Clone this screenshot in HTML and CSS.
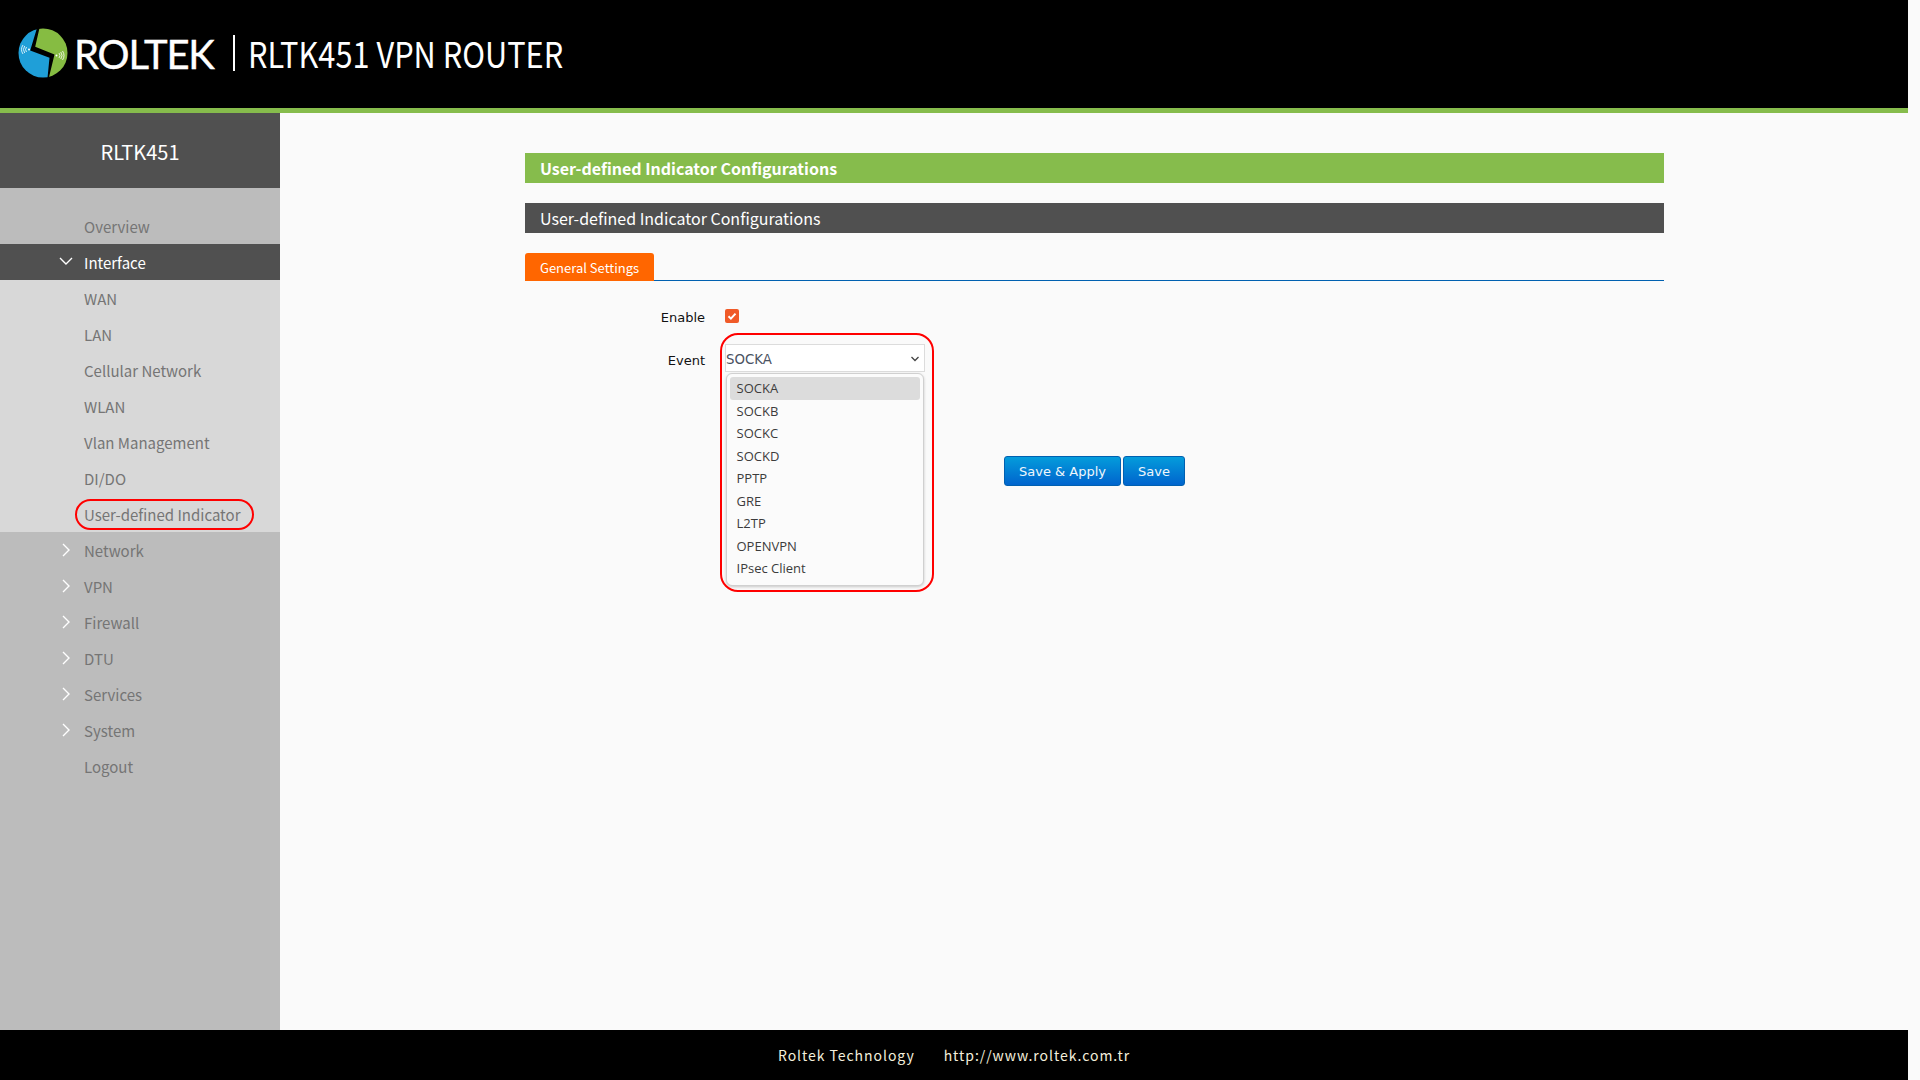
FILE: index.html
```html
<!DOCTYPE html>
<html lang="en">
<head>
<meta charset="utf-8">
<title>RLTK451 VPN ROUTER</title>
<link rel="stylesheet" href="styles.css">
</head>
<body>
<div class="page">
  <header class="header">
    <svg class="logo-mark" width="50" height="50" viewBox="0 0 50 50" aria-hidden="true">
      <defs><clipPath id="disc"><circle cx="25" cy="25" r="24.5"/></clipPath></defs>
      <g clip-path="url(#disc)">
        <rect width="50" height="50" fill="#000"/>
        <polygon points="19,0 12.2,22.5 31.5,29.8 29.5,50 0,50 0,0" fill="#1f9fd8"/>
        <polygon points="21.5,0 17.2,18.8 36.5,26.5 30.8,50 50,50 50,0" fill="#86bc42"/>
      </g>
      <g fill="none" stroke="#fff" stroke-width=".8">
        <circle cx="11" cy="21.5" r="1" fill="#fff" stroke="none"/>
        <path d="M8.5 19a4 4 0 0 0 0 5M6.7 18a6 6 0 0 0 0 7M5 17a8 8 0 0 0 0 9"/>
        <circle cx="38.5" cy="27.5" r="1" fill="#fff" stroke="none"/>
        <path d="M41 25a4 4 0 0 1 0 5M42.8 24a6 6 0 0 1 0 7M44.5 23a8 8 0 0 1 0 9"/>
      </g>
    </svg>
    <span class="logo-word">ROLTEK</span>
    <span class="logo-rule"></span>
    <span class="logo-model">RLTK451 VPN ROUTER</span>
  </header>
  <div class="main">
    <aside class="sidebar">
      <div class="brand">RLTK451</div>
      <nav class="menu">
        <a class="item">Overview</a>
        <a class="item open"><svg class="chev" width="14" height="14" viewBox="0 0 14 14"><path d="M1 4l6 6 6-6"/></svg>Interface</a>
        <div class="sub">
          <a class="item">WAN</a>
          <a class="item">LAN</a>
          <a class="item">Cellular Network</a>
          <a class="item">WLAN</a>
          <a class="item">Vlan Management</a>
          <a class="item">DI/DO</a>
          <a class="item"><span class="hl">User-defined Indicator</span></a>
        </div>
        <a class="item"><svg class="chev" width="14" height="14" viewBox="0 0 14 14"><path d="M4 1l6 6-6 6"/></svg>Network</a>
        <a class="item"><svg class="chev" width="14" height="14" viewBox="0 0 14 14"><path d="M4 1l6 6-6 6"/></svg>VPN</a>
        <a class="item"><svg class="chev" width="14" height="14" viewBox="0 0 14 14"><path d="M4 1l6 6-6 6"/></svg>Firewall</a>
        <a class="item"><svg class="chev" width="14" height="14" viewBox="0 0 14 14"><path d="M4 1l6 6-6 6"/></svg>DTU</a>
        <a class="item"><svg class="chev" width="14" height="14" viewBox="0 0 14 14"><path d="M4 1l6 6-6 6"/></svg>Services</a>
        <a class="item"><svg class="chev" width="14" height="14" viewBox="0 0 14 14"><path d="M4 1l6 6-6 6"/></svg>System</a>
        <a class="item">Logout</a>
      </nav>
    </aside>
    <main class="content">
      <h2 class="bar bar-green">User-defined Indicator Configurations</h2>
      <h3 class="bar bar-dark">User-defined Indicator Configurations</h3>
      <div class="tabs"><span class="tab">General Settings</span></div>
      <div class="form">
        <div class="row row-enable">
          <label class="label">Enable</label>
          <span class="check"><svg width="10" height="10" viewBox="0 0 10 10"><path d="M1.5 5.2l2.4 2.4 4.6-5"/></svg></span>
        </div>
        <div class="row row-event">
          <label class="label">Event</label>
          <div class="dropdown">
            <div class="select"><span>SOCKA</span><svg width="10" height="8" viewBox="0 0 10 8"><path d="M1.5 2l3.5 3.5L8.500 2"/></svg></div>
            <ul class="list">
              <li class="active">SOCKA</li>
              <li>SOCKB</li>
              <li>SOCKC</li>
              <li>SOCKD</li>
              <li>PPTP</li>
              <li>GRE</li>
              <li>L2TP</li>
              <li>OPENVPN</li>
              <li>IPsec Client</li>
            </ul>
            <span class="ring"></span>
          </div>
          <div class="actions">
            <button class="btn btn-apply">Save &amp; Apply</button>
            <button class="btn btn-save">Save</button>
          </div>
        </div>
      </div>
    </main>
  </div>
  <footer class="footer"><span>Roltek Technology</span><span>http://www.roltek.com.tr</span></footer>
</div>
</body>
</html>
```
FILE: styles.css
```css
* { box-sizing: border-box; }
html, body { margin: 0; height: 100%; background: #fafafa; }
body { overflow: hidden; font-family: "Noto Sans CJK SC", "Noto Sans", sans-serif; }

.page { width: 1908px; height: 1080px; display: flex; flex-direction: column; }

.header {
  height: 113px;
  flex: none;
  background: #000;
  border-bottom: 5px solid #86bc4c;
  display: flex;
  align-items: center;
  padding: 0 0 0 18px;
  color: #fff;
}
.logo-mark { flex: none; display: block; margin-top: -2px; }
.logo-word {
  font-family: Lato, sans-serif;
  font-size: 40px;
  font-weight: 400;
  -webkit-text-stroke: .4px #fff;
  letter-spacing: -1.2px;
  line-height: 50px;
  margin: 0 0 0 6px;
  width: 158.500px;
}
.logo-rule { width: 2px; height: 36px; background: #fff; margin-top: -3px; flex: none; }
.logo-model {
  font-size: 36px;
  line-height: 50px;
  margin: -5px 0 0 13px;
  white-space: nowrap;
  font-weight: 400;
  transform: scaleX(.854);
  transform-origin: left center;
}

.main { flex: 1; display: flex; min-height: 0; }

.sidebar { width: 280px; flex: none; background: #bcbcbc; }
.brand {
  height: 75px;
  background: #505050;
  color: #fff;
  font-size: 20px;
  line-height: 77px;
  text-align: center;
}
.menu { padding-top: 20px; display: flex; flex-direction: column; }
.item {
  height: 36px;
  padding-left: 84px;
  position: relative;
  display: flex;
  align-items: center;
  color: #757575;
  font-size: 15px;
  white-space: nowrap;
}
.item.open { background: #505050; color: #fff; }
.sub { background: #d8d8d8; }
.chev { position: absolute; left: 59px; top: 11px; fill: none; stroke: #fff; stroke-width: 1.4; }
.item.open .chev { top: 10px; }
.hl { position: relative; }
.hl::after {
  content: "";
  position: absolute;
  left: -9px;
  right: -14px;
  top: -5px;
  bottom: -5px;
  border: 2px solid #f00;
  border-radius: 17px;
}

.content { flex: 1; padding: 40px 244px 0 245px; }
.bar {
  margin: 0 0 20px;
  height: 30px;
  padding-left: 15px;
  color: #fff;
  font-size: 16px;
  line-height: 31px;
}
.bar-green { background: #86bc4c; font-weight: 700; }
.bar-dark { background: #505050; font-weight: 400; }
.tabs { height: 28px; border-bottom: 1px solid #0060b0; display: flex; }
.tab {
  width: 129px;
  height: 28px;
  background: #ff6600;
  border-radius: 3px 3px 0 0;
  color: #fff;
  font-size: 13px;
  line-height: 30px;
  text-align: center;
}

.form { display: flex; flex-direction: column; }
.row { display: flex; }
.label {
  width: 180px;
  text-align: right;
  font-family: "DejaVu Sans", sans-serif;
  font-size: 13px;
  color: #111;
  flex: none;
}
.row-enable { height: 63px; padding-top: 28px; line-height: 18px; }
.check {
  width: 14px;
  height: 14px;
  margin-left: 20px;
  background: #f05a28;
  border-radius: 2px;
  display: flex;
  align-items: center;
  justify-content: center;
}
.check svg { fill: none; stroke: #fff; stroke-width: 2; }
.row-event { align-items: flex-start; }
.row-event .label { line-height: 34px; }
.dropdown { position: relative; width: 200px; margin-left: 20px; flex: none; }
.select {
  height: 28px;
  background: #fff;
  border: 1px solid #dcdcdc;
  display: flex;
  align-items: center;
  justify-content: space-between;
  padding: 2px 4px 0 0;
  font-family: "DejaVu Sans", sans-serif;
  font-size: 13.33px;
  color: #4a5262;
}
.select svg { fill: none; stroke: #444; stroke-width: 1.3; }
.list {
  list-style: none;
  margin: 1px 0 0 1px;
  padding: 3px 3px 4px 3px;
  width: 198px;
  height: 213px;
  background: #fbfbfb;
  border: 1px solid #d0d0d0;
  border-radius: 6px;
  box-shadow: 0 1px 3px rgba(0,0,0,.2);
  font-family: "Open Sans", sans-serif;
  font-size: 13px;
  color: #3c3c3c;
}
.list li { height: 22.5px; line-height: 23px; padding-left: 6.500px; }
.list li.active { background: #dcdcdc; border-radius: 3px; }
.ring {
  position: absolute;
  left: -5px;
  top: -11px;
  width: 214px;
  height: 259px;
  border: 2px solid #f00;
  border-radius: 18px;
}
.actions { display: flex; gap: 2px; margin: 112px 0 0 79px; }
.btn {
  height: 30px;
  padding: 0;
  border: 1px solid #0060b0;
  border-radius: 3px;
  background: linear-gradient(#049cdb, #0064cd);
  color: #f0f6fc;
  font-family: "DejaVu Sans", sans-serif;
  font-size: 13px;
}
.btn-apply { width: 117px; }
.btn-save { width: 62px; }

.footer {
  height: 50px;
  flex: none;
  background: #000;
  color: #f4efdc;
  font-size: 14px;
  letter-spacing: .95px;
  display: flex;
  align-items: center;
  justify-content: center;
  gap: 29px;
}
```
